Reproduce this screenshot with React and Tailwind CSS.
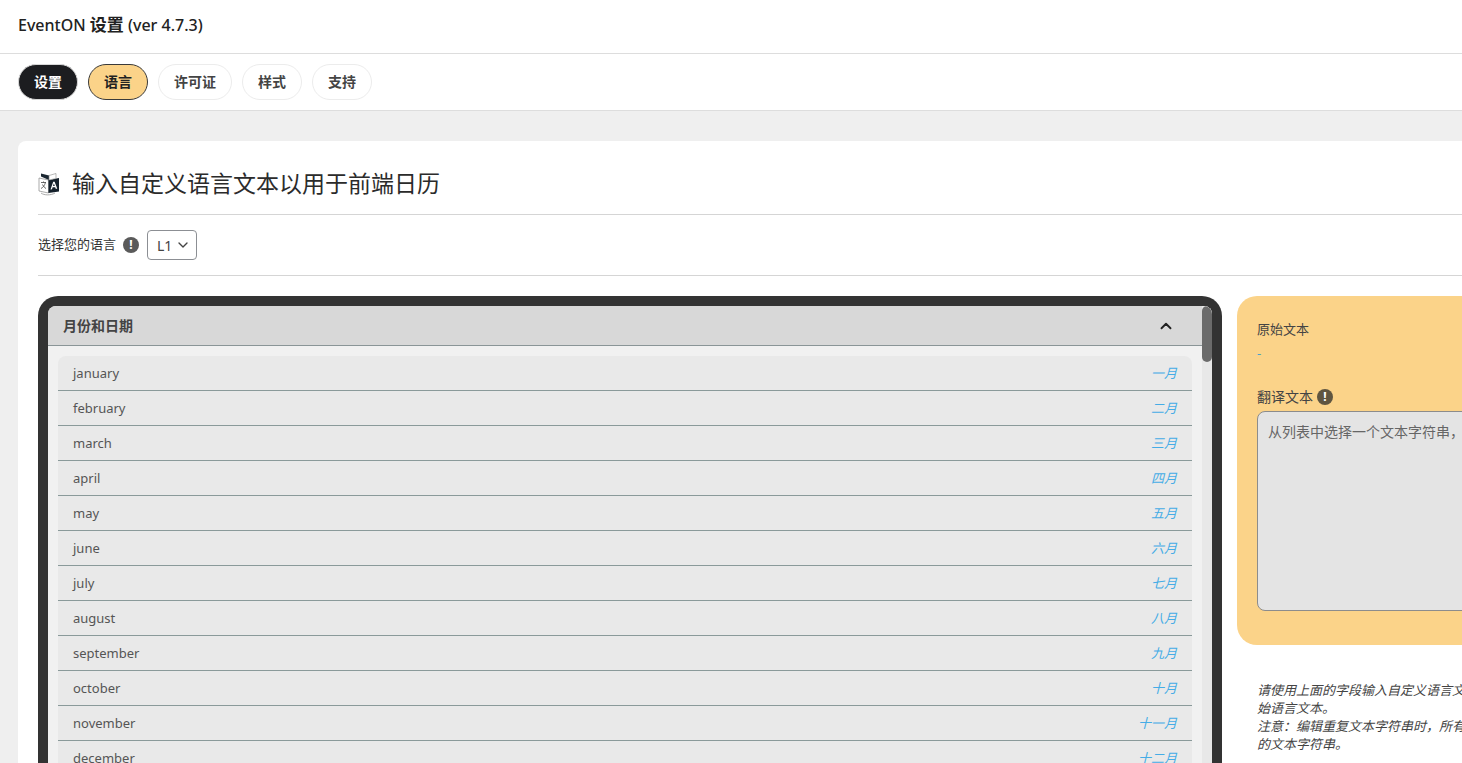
import React from 'react';
import { ChevronDown, ChevronUp } from 'lucide-react';

const font = 'font-["Noto_Sans","Noto_Sans_CJK_SC",sans-serif]';

const tabs = [
  { label: '设置', cls: 'w-[60px] h-[35px] bg-[#1c1d20] text-white border-[#d8d8d8]' },
  { label: '语言', cls: 'w-[60px] bg-[#fbd389] text-[#222] border-[#3a3a3a]' },
  { label: '许可证', cls: 'w-[74px] bg-white text-[#444] border-[#ececec]' },
  { label: '样式', cls: 'w-[60px] bg-white text-[#444] border-[#ececec]' },
  { label: '支持', cls: 'w-[60px] bg-white text-[#444] border-[#ececec]' },
];

const months = [
  ['january', '一月'],
  ['february', '二月'],
  ['march', '三月'],
  ['april', '四月'],
  ['may', '五月'],
  ['june', '六月'],
  ['july', '七月'],
  ['august', '八月'],
  ['september', '九月'],
  ['october', '十月'],
  ['november', '十一月'],
  ['december', '十二月'],
];

function Info({ className }) {
  return (
    <span className={`w-4 h-4 rounded-full flex items-center justify-center text-white text-[12px] font-bold leading-none ${className}`}>!</span>
  );
}

function LangIcon() {
  return (
    <svg width="22" height="24" viewBox="0 0 22 24" className="shrink-0">
      <path d="M1 6 L10.5 8 V21 L1 19 Z" fill="#fff" stroke="#888" strokeWidth="0.7" />
      <path d="M3 10.5 H8 M5.5 9.5 V10.5 M7.5 10.5 C6.5 13.5 5 15.5 3 16.5 M4.5 12.5 C5.5 14.5 6.5 15.5 8 16.5" fill="none" stroke="#444" strokeWidth="0.8" />
      <path d="M10.5 8 L21 6 V19.5 L10.5 21 Z" fill="#14202b" />
      <path d="M3 1.5 L11 3.5 V8 L3 4.5 Z" fill="#1a2630" />
      <path d="M11 3.5 L18 1.5 V6.5 L11 8 Z" fill="#fff" stroke="#888" strokeWidth="0.6" />
      <path d="M12.5 17.5 L15.2 9.8 H16.6 L19.3 16.8 H17.7 L17.2 15.2 H14.6 L14 17.2 Z M15 14 H16.8 L15.9 11.6 Z" fill="#fff" />
      <path d="M3 21 C6 23.5 13 23.5 17 21" fill="none" stroke="#888" strokeWidth="0.7" />
    </svg>
  );
}

export default function App() {
  return (
    <div className={`w-[1462px] h-[763px] overflow-hidden bg-[#efefef] text-[#333] ${font}`}>
      {/* Header */}
      <div className="h-[54px] bg-white border-b border-[#dddddd] pl-[18px] flex items-center pb-[4px]">
        <h1 className="text-[16px] font-medium text-[#222] leading-none">EventON <span className="text-[17px] font-bold">设置</span> (ver 4.7.3)</h1>
      </div>
      {/* Tabs */}
      <div className="h-[57px] bg-white border-b border-[#dddddd] pl-[18px] flex items-center gap-[10px]">
        {tabs.map((t) => (
          <div key={t.label} className={`h-[36px] rounded-full border flex items-center justify-center pb-[2px] text-[14px] font-bold ${t.cls}`}>
            {t.label}
          </div>
        ))}
      </div>
      {/* Card */}
      <div className="mt-[30px] ml-[18px] w-[1600px] bg-white rounded-tl-lg px-5 h-[700px]">
        <div className="h-[74px] border-b border-[#d5d5d5] flex items-center gap-[12px] pt-[12px]">
          <LangIcon />
          <h2 className="text-[23px] font-normal text-[#2b2b2b] leading-none">输入自定义语言文本以用于前端日历</h2>
        </div>
        <div className="h-[61px] border-b border-[#d5d5d5] flex items-center">
          <span className="text-[13px] text-[#333]">选择您的语言</span>
          <Info className="ml-[7px] bg-[#5a5a5a]" />
          <div className="ml-2 w-[50px] h-[30px] rounded border border-[#8c8f94] flex items-center pl-[9px] text-[14px] text-[#444]">
            L1
            <ChevronDown className="w-4 h-4 ml-[3px] text-[#444]" strokeWidth={2} />
          </div>
        </div>
        <div className="mt-5 flex items-start gap-[15px]">
          {/* List panel */}
          <div className="w-[1184px] h-[600px] shrink-0 rounded-[20px] bg-[#333333] p-[10px]">
            <div className="relative h-full rounded-t-lg overflow-hidden bg-[#f1f1f1]">
              <div className="h-10 bg-[#d8d8d8] border-b border-[#8a9597] flex items-center justify-between pl-[15px] pr-[37px]">
                <span className="text-[14px] font-bold text-[#444]">月份和日期</span>
                <ChevronUp className="w-[18px] h-[18px] text-[#222]" strokeWidth={2.5} />
              </div>
              <div className="mt-[10px] ml-[10px] mr-5 rounded-t-lg overflow-hidden bg-[#e9e9e9]">
                {months.map(([en, zh]) => (
                  <div key={en} className="h-[35px] border-b border-[#8a9a9a] flex items-center justify-between px-[15px] pt-[1px]">
                    <span className="text-[13px] text-[#555]">{en}</span>
                    <span className="text-[13px] italic text-[#45ace6]">{zh}</span>
                  </div>
                ))}
              </div>
              {/* Scrollbar */}
              <div className="absolute top-0 right-0 bottom-0 w-[10px] bg-[#e8e8e8]">
                <div className="h-[56px] rounded-[5px] bg-[#6b6b6b]"></div>
              </div>
            </div>
          </div>
          {/* Editor column */}
          <div className="w-[400px] shrink-0">
            <div className="h-[349px] rounded-[20px] bg-[#fbd389] px-5 pt-[24px]">
              <div className="text-[13px] text-[#444] leading-[18px]">原始文本</div>
              <div className="mt-[6px] text-[13px] text-[#4aa3c8] leading-[18px]">-</div>
              <div className="mt-[26px] flex items-center gap-1 text-[14px] text-[#444] leading-[18px]">
                翻译文本
                <Info className="bg-[#5f5540]" />
              </div>
              <div className="mt-[5px] h-[200px] rounded-lg border border-[#8c8c8c] bg-[#e4e4e4] px-[10px] py-[10px] text-[14px] text-[#666] leading-[20px] whitespace-nowrap overflow-hidden">
                从列表中选择一个文本字符串，
              </div>
            </div>
            <p className="mt-[36px] pl-5 text-[13px] italic text-[#444] leading-[18px] whitespace-nowrap">
              请使用上面的字段输入自定义语言文
              <br />
              始语言文本。
              <br />
              注意：编辑重复文本字符串时，所有
              <br />
              的文本字符串。
            </p>
          </div>
        </div>
      </div>
    </div>
  );
}
